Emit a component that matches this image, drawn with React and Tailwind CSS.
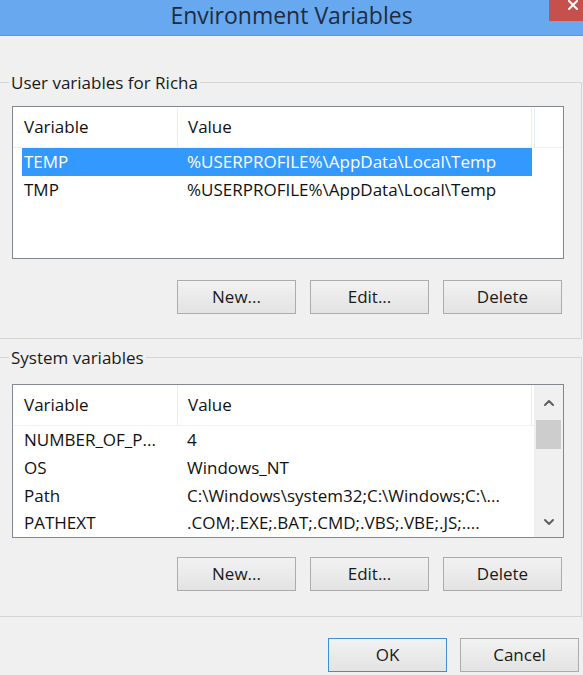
import { ChevronUp, ChevronDown, X } from "lucide-react";

const userVars = [
  { name: "TEMP", value: "%USERPROFILE%\\AppData\\Local\\Temp", selected: true },
  { name: "TMP", value: "%USERPROFILE%\\AppData\\Local\\Temp" },
];

const systemVars = [
  { name: "NUMBER_OF_P...", value: "4" },
  { name: "OS", value: "Windows_NT" },
  { name: "Path", value: "C:\\Windows\\system32;C:\\Windows;C:\\..." },
  { name: "PATHEXT", value: ".COM;.EXE;.BAT;.CMD;.VBS;.VBE;.JS;...." },
];

const Button = ({ children, primary }) => (
  <button
    className={`w-[119px] h-[34px] border text-[17px] text-[#1a1a1a] bg-gradient-to-b from-[#f2f2f2] to-[#e3e3e3] ${
      primary ? "border-[#3c8fd9]" : "border-[#acacac]"
    }`}
  >
    {children}
  </button>
);

const ListHeader = ({ scroll }) => (
  <div className="flex h-[41px] border-b border-[#eef2f7] shrink-0">
    <div className="w-[165px] pl-[11px] flex items-center border-r border-[#e8eef5]">Variable</div>
    <div className="w-[354px] pl-[10px] flex items-center border-r border-[#e8eef5]">Value</div>
    {!scroll && <div className="w-[3px] border-r border-[#e8eef5]" />}
  </div>
);

const Row = ({ item }) => (
  <div
    className={`ml-[9px] w-[510px] h-[28px] flex items-center ${
      item.selected ? "bg-[#3399ff] text-white" : ""
    }`}
  >
    <div className="w-[156px] pl-[2px] whitespace-nowrap">{item.name}</div>
    <div className="pl-[9px] whitespace-nowrap">{item.value}</div>
  </div>
);

const GroupBox = ({ label, children }) => (
  <div className="relative -ml-[3px] w-[585px] border border-[#d5d5d5] pl-[14px]">
    <span className="absolute -top-[12px] left-[11px] px-[2px] bg-[#f0f0f0] text-[17px] leading-[24px] text-[#1a1a1a]">
      {label}
    </span>
    {children}
  </div>
);

const ButtonRow = () => (
  <div className="flex gap-[14px] pl-[165px]">
    <Button>New...</Button>
    <Button>Edit...</Button>
    <Button>Delete</Button>
  </div>
);

export default function App() {
  return (
    <div
      className="w-[583px] h-[675px] overflow-hidden bg-[#f0f0f0] text-[17px] text-[#111]"
      style={{ fontFamily: '"Open Sans", "Noto Sans", sans-serif' }}
    >
      {/* title bar */}
      <div className="relative h-[36px] bg-[#68a8ef] border-b border-[#5b97db] flex items-center justify-center">
        <span className="text-[23px] leading-[28px] text-[#1f2c3d] -mt-[6px]">Environment Variables</span>
        <div className="absolute right-0 top-0 w-[34px] h-[21px] bg-[#c7504c] flex items-start justify-end pr-[2px]">
          <X className="w-[16px] h-[16px] text-white -mt-[3px]" strokeWidth={3} />
        </div>
      </div>

      <div className="pt-[46px]">
        <GroupBox label="User variables for Richa">
          <div className="mt-[23px] w-[552px] h-[153px] border border-[#828790] bg-white flex flex-col">
            <ListHeader />
            {userVars.map((v) => (
              <Row key={v.name} item={v} />
            ))}
          </div>
          <div className="mt-[21px] mb-[24px]">
            <ButtonRow />
          </div>
        </GroupBox>

        <div className="mt-[18px]">
          <GroupBox label="System variables">
            <div className="mt-[26px] w-[552px] h-[154px] border border-[#828790] bg-white flex">
              <div className="flex-1 flex flex-col">
                <ListHeader scroll />
                {systemVars.map((v) => (
                  <Row key={v.name} item={v} />
                ))}
              </div>
              {/* vertical scrollbar */}
              <div className="w-[29px] bg-[#f0f0f0] flex flex-col items-center">
                <div className="h-[35px] flex items-center justify-center">
                  <ChevronUp className="w-[16px] h-[16px] text-[#606060]" strokeWidth={3} />
                </div>
                <div className="w-[25px] h-[29px] bg-[#cdcdcd]" />
                <div className="flex-1" />
                <div className="h-[30px] flex items-center justify-center">
                  <ChevronDown className="w-[16px] h-[16px] text-[#606060]" strokeWidth={3} />
                </div>
              </div>
            </div>
            <div className="mt-[19px] mb-[25px]">
              <ButtonRow />
            </div>
          </GroupBox>
        </div>

        <div className="mt-[21px] flex justify-end gap-[13px] pr-[4px]">
          <Button primary>OK</Button>
          <Button>Cancel</Button>
        </div>
      </div>
    </div>
  );
}
